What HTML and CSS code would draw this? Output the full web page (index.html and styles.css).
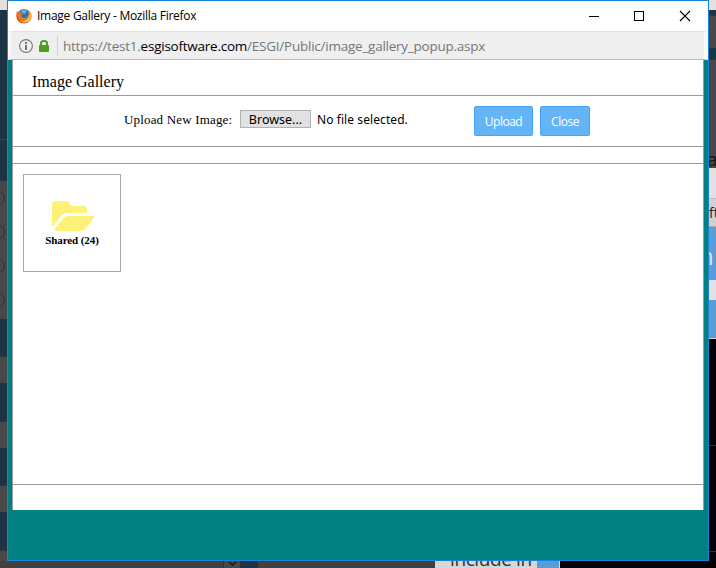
FILE: index.html
```html
<!DOCTYPE html>
<html lang="en">
<head>
<meta charset="utf-8">
<title>Image Gallery</title>
<link rel="stylesheet" href="styles.css">
</head>
<body>
<div class="desktop">
  <div class="edge left">
    <i class="pale h10"></i><i class="navy h129"></i><i class="navy lined h42"></i>
    <div class="radios"><b></b><b></b><b></b><b></b></div>
    <i class="navy h37"></i><i class="grey h27"></i><i class="navy h38"></i><i class="grey h27"></i><i class="navy h37"></i><i class="grey h27"></i><i class="navy h38"></i><i class="grey fill"></i>
  </div>
  <main class="window">
    <header class="titlebar">
      <svg class="fox" width="16" height="16" viewBox="0 0 16 16">
        <circle cx="8" cy="8" r="7" fill="#2774b8"/>
        <path d="M5 3Q8 0 11 2Q9 3 10 5L8 6Z" fill="#60b7df"/>
        <path d="M1 3L2.2 4Q3.4 3 5 3Q4 4.5 5 5L7 5.4Q6.8 7 5 7.5Q5.5 10 8.5 10Q12.5 9.7 12.4 5.5Q11.8 3 10.5 1.5Q15.5 3.5 15.6 8Q15.3 15 8 15.6Q1 15.1.4 8.5Q.3 5 1 3Z" fill="#e87722"/>
        <path d="M13.4 3.6Q16.5 8 13.4 12.2Q10 15.5 5 13.5Q11 13.3 12.9 9Q14 6.5 13.4 3.6Z" fill="#f7c653"/>
        <path d="M1 5Q.4 12 6 14.5Q3 14 1.4 11.5Q0 8 1 5Z" fill="#b83228"/>
      </svg>
      <span class="caption">Image Gallery - Mozilla Firefox</span>
      <svg class="controls" width="104" height="14" viewBox="0 0 104 14" fill="none" stroke="#000" shape-rendering="crispEdges">
        <path d="M1 7.5H11M46.5 2.5H55.5V11.5H46.5Z"/>
        <path d="M92 2L102 12M102 2L92 12" shape-rendering="auto" stroke-width="1.1"/>
      </svg>
    </header>
    <div class="addressbar">
      <svg class="info" width="32" height="16" viewBox="0 0 32 16">
        <circle cx="8" cy="8" r="6.4" fill="none" stroke="#777" stroke-width="1.1"/>
        <path d="M7 4H9V6H7ZM7 7H9V12H7Z" fill="#777"/>
        <path d="M23 8V5.2Q23 3 26 3Q29 3 29 5.2V8" fill="none" stroke="#4b9f24" stroke-width="2"/>
        <rect x="21" y="7" width="10" height="7" rx="1" fill="#4b9f24"/>
      </svg>
      <span class="url">https://test1.<em>esgisoftware.com</em>/ESGI/Public/image_gallery_popup.aspx</span>
    </div>
    <section class="page">
      <h1><span>Image Gallery</span></h1>
      <form class="upload">
        <label>Upload New Image:</label>
        <button type="button" class="browse"><span>Browse...</span></button>
        <span class="status">No file selected.</span>
        <button type="button" class="action up"><span>Upload</span></button>
        <button type="button" class="action close"><span>Close</span></button>
      </form>
      <div class="band"></div>
      <div class="gallery">
        <div class="folder">
          <svg width="43" height="32" viewBox="0 0 43 32" fill="#fff07a">
            <path d="M0 27V4Q0 1 3 1H14Q17 1 17.5 4Q18 6 20 6H31Q34.5 6 35 9V13H15Q11 13.5 9 16Z"/>
            <path d="M13 17Q14.500 16 16 16H41Q43 16 42 18L34 28Q32 31 29 31H4Q1.500 31 3 28.500L11 18.500Z"/>
          </svg>
          <strong>Shared (24)</strong>
        </div>
      </div>
      <footer></footer>
    </section>
  </main>
  <div class="edge right">
    <i class="pale h10"></i><i class="navy h5"></i><i class="grey h33"></i><i class="navy h11"></i><i class="grey h109">a</i><i class="white h30"></i><i class="tab h29">ft</i><i class="blue h53">n</i><i class="white h20"></i><i class="blue h38"></i><i class="hair"></i>
    <i class="black h106"></i><i class="black lined h106"></i><i class="black lined fill"></i>
  </div>
  <div class="under">
    <i class="dark u1"></i><i class="drop"><svg width="9" height="6" viewBox="0 0 9 6"><path d="M1 1L4.500 4L8 1" fill="none" stroke="#171717" stroke-width="1.500"/></svg></i><i class="navy u2"></i><i class="dark u3"></i><i class="include"><span>include in</span></i><i class="blue u4"></i><i class="black fill"></i>
  </div>
</div>
</body>
</html>
```

FILE: styles.css
```css
* { box-sizing: border-box; }
body { margin: 0; background: #000; overflow: hidden; }
i, em { font-style: normal; }
.desktop { width: 716px; height: 568px; display: grid; grid-template-columns: 7px 702px 7px; grid-template-rows: 561px 7px; }

.edge { display: flex; flex-direction: column; overflow: hidden; height: 561px; }
.edge i { flex: none; display: block; overflow: hidden; }
.edge i.fill, .under i.fill { flex: 1; }
.pale { background: #e2e2e2; }
.navy { background: #1e3446; }
.grey { background: #484848; border-top: 1px solid #363636; }
.white { background: #e1e1e1; }
.blue { background: #589cd8; }
.black { background: #000; }
.lined { border-top: 1px solid #3b4852; }
.black.lined { border-color: #303030; }
.hair { height: 1px; background: #d5d5d5; }
.h5 { height: 5px; } .h10 { height: 10px; } .h11 { height: 11px; }
.h20 { height: 20px; } .h27 { height: 27px; } .h29 { height: 29px; }
.h30 { height: 30px; } .h33 { height: 33px; } .h37 { height: 37px; }
.h38 { height: 38px; } .h42 { height: 42px; } .h53 { height: 53px; }
.h106 { height: 106px; } .h109 { height: 109px; } .h129 { height: 129px; }
.radios { height: 138px; flex: none; background: #484848; padding-top: 10px; display: flex; flex-direction: column; gap: 20px; }
.radios b { width: 14px; height: 14px; flex: none; margin-left: -9px; border: 1px solid #303030; border-radius: 50%; }
.right .h109 { font: 19px/20px "Open Sans", sans-serif; color: #171717; padding-top: 89px; text-indent: -2px; }
.tab { background: #d1d1d1; border-top: 1px solid #bbb; border-bottom: 1px solid #aaa; font: 14px/27px "Open Sans", sans-serif; text-indent: 0; color: #222; }
.right .h53 { font: 24px/58px "Open Sans", sans-serif; color: #e1e1e1; text-indent: -10px; }

.window { border: 1px solid #1883d7; background: #008080; height: 561px; }
.titlebar { height: 30px; background: #fff; display: flex; align-items: center; padding: 0 16px 0 8px; }
.fox { flex: none; }
.caption { flex: 1; margin-left: 5px; font: 12px/16px "Open Sans", sans-serif; letter-spacing: -.27px; color: #000; white-space: nowrap; }
.controls { flex: none; }
.addressbar { height: 29px; background: #efefef; border: 1px solid #e3e3e3; border-width: 1px 4px 1px 3px; border-left-color: #fafafa; border-right-color: #fafafa; border-bottom-color: #b9b9b9; display: flex; align-items: center; padding-left: 7px; }
.info { flex: none; }
.url { margin-left: 7px; padding-left: 5px; height: 20px; border-left: 1px solid #d0d0d0; font: 13.5px/20px "Open Sans", sans-serif; letter-spacing: -.24px; color: #777; white-space: nowrap; }
.url em { color: #000; }

.page { margin: 0 4px; height: 450px; background: #fff; border: 1px solid #999; border-width: 0 1px; }
h1 { height: 36px; margin: 0; padding: 12px 0 0 19px; border-bottom: 1px solid #999; font: 16px/20px "Liberation Serif", serif; color: #000; }
h1 span { display: inline-block; }
.upload { height: 51px; margin: 0; padding: 10px 0 0 111px; border-bottom: 1px solid #999; display: flex; align-items: flex-start; }
.upload label { width: 116px; flex: none; font: 13px/16px "Liberation Serif", serif; letter-spacing: .17px; padding-top: 6px; white-space: nowrap; }
.upload button { padding: 0; flex: none; white-space: nowrap; }
.browse { width: 71px; height: 18px; margin-top: 4px; background: #e1e1e1; border: 1px solid #b2b2b2; font: 12.5px/15px "Noto Sans", sans-serif; color: #000; }
.status { width: 157px; margin-left: 6px; padding-top: 5px; font: 12px/18px "Noto Sans", sans-serif; letter-spacing: .08px; white-space: nowrap; }
.action { height: 30px; background: #64b5f8; border: 1px solid #48a5f3; border-radius: 2px; color: #fff; font: 12px/30px "Open Sans", sans-serif; letter-spacing: -.5px; }
.action span { display: block; height: 28px; }
.up { width: 59px; }
.close { width: 50px; margin-left: 7px; }
.band { height: 17px; border-bottom: 1px solid #999; }
.gallery { height: 321px; padding: 10px; border-bottom: 1px solid #999; }
.folder { width: 98px; height: 98px; border: 1px solid #aaa; display: flex; flex-direction: column; align-items: center; padding-top: 25px; }
.folder svg { flex: none; margin-left: 3px; }
.folder strong { font: bold 11px/14px "Liberation Serif", serif; letter-spacing: -.1px; margin-top: 1px; }
footer { height: 25px; }

.under { grid-column: 1 / -1; height: 7px; display: flex; overflow: hidden; }
.under i { flex: none; height: 7px; overflow: hidden; }
.dark { background: #404040; }
.u1 { width: 223px; }
.drop { width: 18px; background: #484848; border: solid #303030; border-width: 0 1px; display: flex; justify-content: center; }
.u2 { width: 17px; }
.u3 { width: 177px; }
.include { width: 102px; background: #d7d7d7; color: #333; font: 19px/20px "Open Sans", sans-serif; letter-spacing: -.4px; padding-left: 15px; white-space: nowrap; }
.include span { display: block; margin-top: -12px; }
.u4 { width: 23px; border-right: 1px solid #ddd; }
```
